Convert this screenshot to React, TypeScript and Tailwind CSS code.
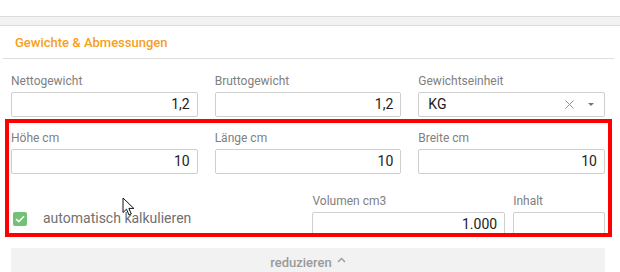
import { X } from "lucide-react";

function Field({ label, value, className = "" }: { label: string; value?: string; className?: string }) {
  return (
    <div className={"flex flex-col " + className}>
      <div className="h-4 text-[12px] leading-4 text-[#808080]">{label}</div>
      <div className="mt-[3px] flex h-[25px] items-center justify-end rounded-[2px] border border-[#cfcfcf] bg-white px-[7px] text-[14px] text-[#222]">
        {value}
      </div>
    </div>
  );
}

function Cursor() {
  return (
    <svg className="absolute left-[122px] top-[197px]" width="14" height="20" viewBox="0 0 14 20">
      <path
        d="M1 1 L1 15.5 L4.5 12.2 L7 18 L9.3 17 L6.9 11.4 L11.8 11.4 Z"
        fill="#fff"
        stroke="#111"
        strokeWidth="1"
        strokeLinejoin="round"
      />
    </svg>
  );
}

export default function App() {
  return (
    <div className="relative h-[272px] w-[620px] overflow-hidden bg-white font-['Roboto',sans-serif]">
      <div className="h-4" />
      <div className="h-[10px] border-y border-[#dcdcdc] bg-[#f2f2f2]" />

      <div className="ml-[3px] mr-[6px] flex h-[33px] items-center border-b border-[#dedede] pl-3 pt-[2px] text-[13px] font-medium text-[#f7a01c]">
        Gewichte &amp; Abmessungen
      </div>

      <div className="pl-[11px] pr-[15px] pt-[14px]">
        <div className="grid grid-cols-3 gap-x-[17px]">
          <Field label="Nettogewicht" value="1,2" />
          <Field label="Bruttogewicht" value="1,2" />
          <div className="flex flex-col">
            <div className="h-4 text-[12px] leading-4 text-[#808080]">Gewichtseinheit</div>
            <div className="mt-[3px] flex h-[25px] items-center rounded-[2px] border border-[#cfcfcf] bg-white pl-[9px] pr-[10px] text-[14px] text-[#222]">
              <span className="flex-1">KG</span>
              <X size={15} strokeWidth={1.5} className="text-[#8a8a8a]" />
              <span className="ml-[11px] h-0 w-0 border-x-[3px] border-t-[3px] border-x-transparent border-t-[#777]" />
            </div>
          </div>
        </div>

        <div className="mt-[13px] grid grid-cols-3 gap-x-[17px]">
          <Field label="Höhe cm" value="10" />
          <Field label="Länge cm" value="10" />
          <Field label="Breite cm" value="10" />
        </div>

        <div className="mt-[19px] flex">
          <div className="flex w-[302px] items-end pb-[11px]">
            <div className="ml-[2px] flex h-[14px] w-[14px] items-center justify-center rounded-[2px] bg-[#72c276]">
              <svg width="10" height="8" viewBox="0 0 10 8">
                <path d="M1 4 L3.8 6.6 L9 1.2" fill="none" stroke="#fff" strokeWidth="1.5" />
              </svg>
            </div>
            <span className="ml-4 text-[14px] leading-4 text-[#707070]">automatisch kalkulieren</span>
          </div>
          <Field label="Volumen cm3" value="1.000" className="w-[193px]" />
          <Field label="Inhalt" className="ml-[8px] w-[92px]" />
        </div>

        <div className="mt-[11px] flex h-[30px] items-start justify-center bg-[#f2f2f2] pt-[5px] text-[13px] font-medium text-[#9a9a9a]">
          reduzieren
          <svg className="ml-[5px] mt-[4px]" width="9" height="6" viewBox="0 0 9 6">
            <path d="M1 5 L4.5 1.5 L8 5" fill="none" stroke="#9a9a9a" strokeWidth="1.4" />
          </svg>
        </div>
      </div>

      <div className="absolute left-[5px] top-[119px] h-[118px] w-[607px] border-4 border-[#ff0000]" />
      <Cursor />
    </div>
  );
}
